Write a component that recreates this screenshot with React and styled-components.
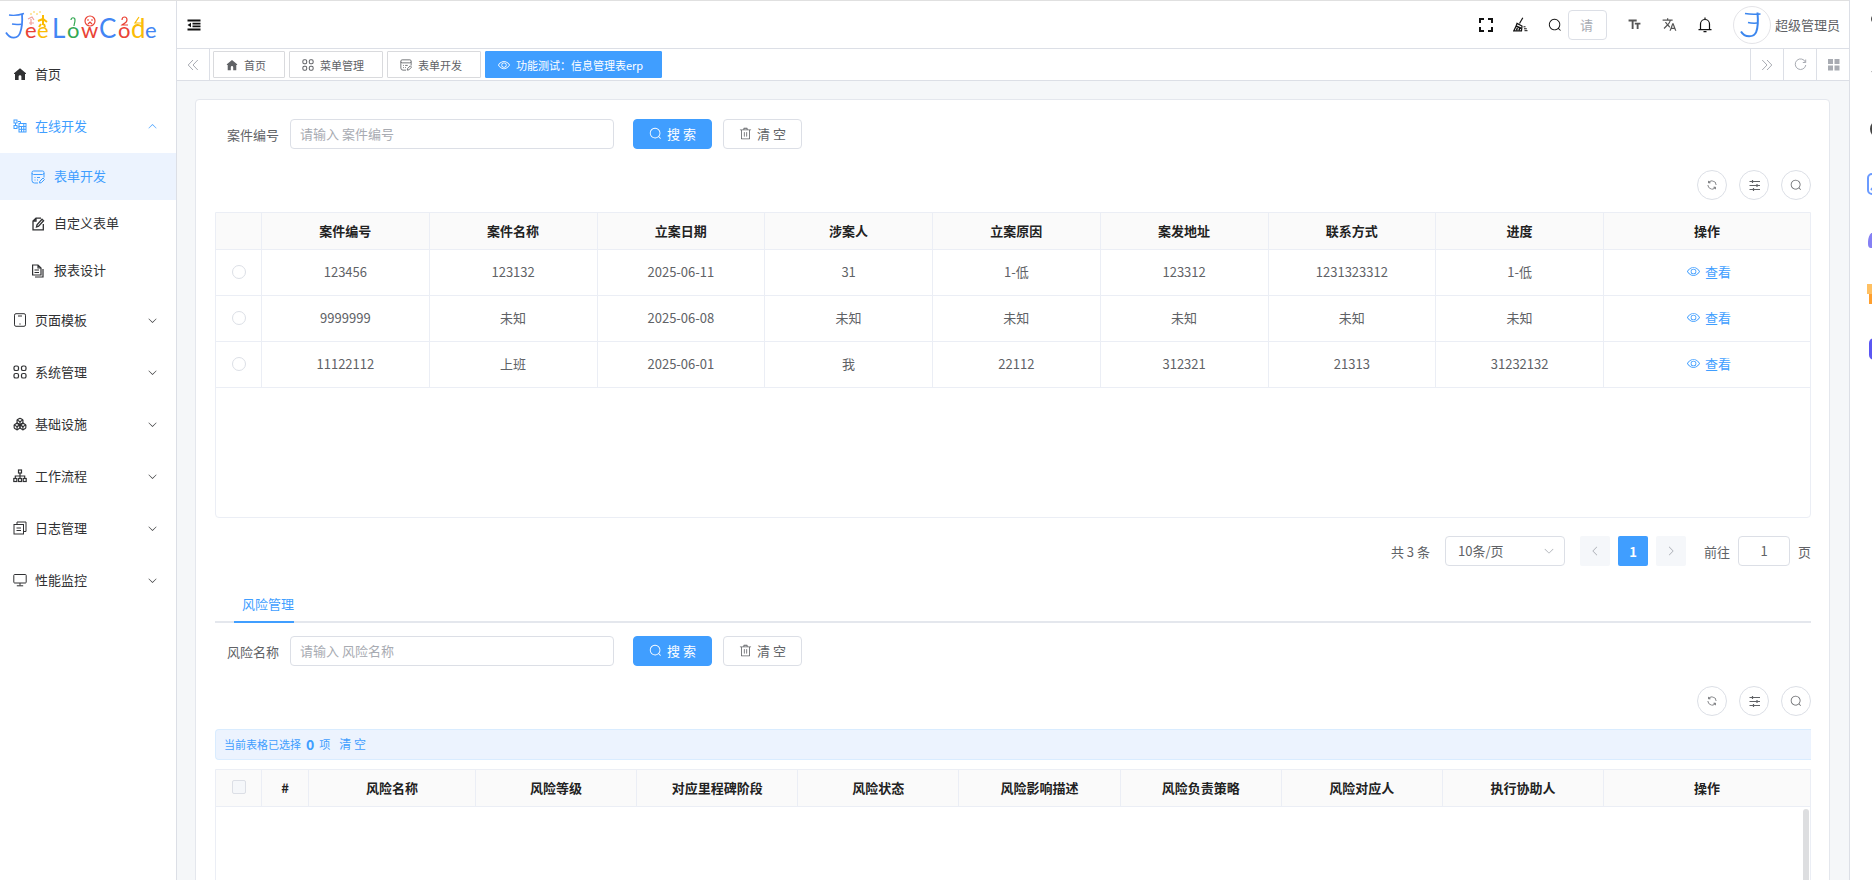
import React from "react";
import styled, { createGlobalStyle, css } from "styled-components";
import { MdTextFields, MdTranslate } from "react-icons/md";
import { Boxes } from "lucide-react";

const c = {
  primary: "#409eff",
  text: "#606266",
  dark: "#303133",
  line: "#dcdfe6",
  cell: "#ebeef5",
  muted: "#a8abb2",
  tint: "#ecf3fe",
};

const Global = createGlobalStyle`
  *, *::before, *::after { box-sizing: border-box; }
  html, body { margin: 0; height: 100%; }
  body, button, input, select {
    font-family: "Noto Sans CJK SC", "Noto Sans", sans-serif;
    font-size: 13px;
  }
  body { color: ${c.text}; background: #fff; overflow: hidden; }
  button { padding: 0; border: 0; background: none; color: inherit; cursor: pointer; }
  svg { display: block; flex: none; }
`;

/* ---------- icons ---------- */
const paths = {
  search:
    "m795.904 750.72 124.992 124.928a32 32 0 0 1-45.248 45.248L750.656 795.904a416 416 0 1 1 45.248-45.248zM480 832a352 352 0 1 0 0-704 352 352 0 0 0 0 704z",
  view:
    "M512 160c320 0 512 352 512 352S832 864 512 864 0 512 0 512s192-352 512-352m0 64c-225.28 0-384.128 208.064-436.8 288 52.608 79.872 211.456 288 436.8 288 225.28 0 384.128-208.064 436.8-288-52.608-79.872-211.456-288-436.8-288zm0 64a224 224 0 1 1 0 448 224 224 0 0 1 0-448m0 64a160.192 160.192 0 0 0-160 160c0 88.192 71.744 160 160 160s160-71.808 160-160-71.744-160-160-160",
  trash:
    "M160 256H96a32 32 0 0 1 0-64h256V95.936a32 32 0 0 1 32-32h256a32 32 0 0 1 32 32V192h256a32 32 0 1 1 0 64h-64v672a32 32 0 0 1-32 32H192a32 32 0 0 1-32-32zm448-64v-64H416v64zM224 896h576V256H224zm192-128a32 32 0 0 1-32-32V416a32 32 0 0 1 64 0v320a32 32 0 0 1-32 32m192 0a32 32 0 0 1-32-32V416a32 32 0 0 1 64 0v320a32 32 0 0 1-32 32",
  down:
    "M831.872 340.864 512 652.672 192.128 340.864a30.592 30.592 0 0 0-42.752 0 29.12 29.12 0 0 0 0 41.6L489.664 714.24a32 32 0 0 0 44.672 0l340.288-331.712a29.12 29.12 0 0 0 0-41.728 30.592 30.592 0 0 0-42.752 0z",
  refresh:
    "M771.776 794.88A384 384 0 0 1 128 512h64a320 320 0 0 0 555.712 216.448H654.72a32 32 0 1 1 0-64h149.056a32 32 0 0 1 32 32v148.928a32 32 0 1 1-64 0v-50.56zM276.288 295.616h92.992a32 32 0 0 1 0 64H220.16a32 32 0 0 1-32-32V178.56a32 32 0 0 1 64 0v50.56A384 384 0 0 1 896.128 512h-64a320 320 0 0 0-555.776-216.384z",
};

const Glyph = ({ name, size = 14, turn = 0 }) => (
  <svg width={size} height={size} viewBox="0 0 1024 1024" fill="currentColor" aria-hidden="true">
    <path d={paths[name]} transform={`rotate(${turn} 512 512)`} />
  </svg>
);

const Line = ({ size = 14, width = 1, box = 14, children }) => (
  <svg
    width={size}
    height={size}
    viewBox={`0 0 ${box} ${box}`}
    fill="none"
    stroke="currentColor"
    strokeWidth={width}
    aria-hidden="true"
  >
    {children}
  </svg>
);

const HomeIcon = ({ size = 14 }) => (
  <svg width={size} height={size} viewBox="0 0 14 14" fill="currentColor" aria-hidden="true">
    <path d="M7 1.2 1 6.2V7h1v6h3.6V9.6a1.4 1.4 0 0 1 2.8 0V13H12V7h1v-.8z" />
  </svg>
);

const OnlineIcon = () => (
  <Line>
    <rect x="1" y="1" width="3" height="3" />
    <rect x="1" y="6.5" width="3" height="3" />
    <path d="M5 2.5h2.5v2M6 8H4.5M2.5 4v2.5" />
    <rect x="6" y="4.5" width="7" height="8.5" />
    <path d="M6 7.5h7M6 10.3h7M8.5 7.5V13M10.8 4.5V13" />
  </Line>
);

const FormIcon = ({ size = 14 }) => (
  <Line size={size}>
    <rect x="1" y="1" width="12" height="3.5" rx="1.5" />
    <path d="M1 3v7.5A2.5 2.5 0 0 0 3.500 13H7M13 3v4.500M3.500 7.500h1M6 7.500h3M3.500 10h1M6 10h1" />
    <path d="M8.500 13l.3-1.800 3.200-3.200 1.500 1.500-3.200 3.200z" />
  </Line>
);

const EditIcon = () => (
  <Line width={1.3}>
    <path d="M12.300 7v5.800H2V4l3-2.800h5M5 1.500V4H2" />
    <path d="M5.500 10l.5-2.200 5-5.600 1.600 1.500-5 5.500z" />
  </Line>
);

const ReportIcon = () => (
  <Line width={1.2}>
    <path d="M1.600 1h5.400l3 3v7H1.600zM7 1v3h3M3.500 6h4.500M3.500 8.500h4.500" />
    <path d="M12 5v8H4" />
  </Line>
);

const TabletIcon = () => (
  <Line>
    <rect x="1.500" y=".7" width="11" height="12.600" rx="1.500" />
    <path d="M5 3h4M6.400 11h1.200" strokeWidth="1.200" />
  </Line>
);

const GridIcon = ({ size = 14 }) => (
  <Line size={size} width={1.2}>
    <rect x="1" y="1" width="4.500" height="4.500" rx="1.600" />
    <rect x="8.500" y="1" width="4.500" height="4.500" rx="1.600" />
    <rect x="1" y="8.500" width="4.500" height="4.500" rx="1.600" />
    <rect x="8.500" y="8.500" width="4.500" height="4.500" rx="1.600" />
  </Line>
);

const SitemapIcon = () => (
  <Line width={1.2}>
    <rect x="5.500" y="1" width="3" height="3" />
    <path d="M7 4v5M2.300 9.500V7h9.400v2.500" />
    <rect x=".8" y="9.500" width="3" height="3" />
    <rect x="5.500" y="9.500" width="3" height="3" />
    <rect x="10.200" y="9.500" width="3" height="3" />
  </Line>
);

const LogIcon = () => (
  <Line>
    <rect x="1" y="3.500" width="9.500" height="9.500" />
    <path d="M4 3.500V1h9v9.500h-2.500M3.500 7h4.500M3.500 9.500h4.500" />
  </Line>
);

const MonitorIcon = () => (
  <Line>
    <rect x=".8" y="1.500" width="12.400" height="8.500" rx=".8" />
    <path d="M7 10v2.500M3.800 12.800h6.400" />
  </Line>
);

const FoldIcon = () => (
  <svg width="14" height="12" viewBox="0 0 14 12" fill="currentColor" aria-hidden="true">
    <path d="M.5.500h13v2H.5zM5.500 3.700h8v1.700h-8zM5.500 6.600h8v1.700h-8zM.5 9.500h13v2H.5zM.5 6l3.500-2.300v4.600z" />
  </svg>
);

const FullIcon = () => (
  <Line width={2}>
    <path d="M1 5V1h4M9 1h4v4M13 9v4H9M5 13H1V9" />
  </Line>
);

const BroomIcon = () => (
  <Line size={15} box={15} width={1.2}>
    <path d="M9.800.8 6.500 6.500" />
    <path d="M4 6.400l5 2.600-.5 4.800H.8C2 11.500 3.200 9.500 4 6.400z" />
    <path d="M3 9l5.500 2.500M3.500 13.500l.8-2.500M6 13.500l.6-2" strokeWidth="1.500" />
    <path d="M10.500 9.800h2M11 11.800h2.800M11.500 13.700h3" strokeWidth="1" />
  </Line>
);

const BellIcon = () => (
  <Line size={16} box={16} width={1.2}>
    <path d="M1.500 12.700h13M3.500 12.500V7a4.500 4.500 0 0 1 9 0v5.500M8 .6v2M6.500 14.600h3" />
  </Line>
);

const ReloadIcon = () => (
  <Line size={13} box={13}>
    <path d="M11.500 4.300A5.300 5.300 0 1 0 11.800 7M11.700 1.500v3H8.800" />
  </Line>
);

const ChevronsIcon = ({ turn = 0 }) => (
  <Line size={12} box={12}>
    <path d="M6 1 1.200 6 6 11M10.800 1 6 6l4.800 5" transform={`rotate(${turn} 6 6)`} />
  </Line>
);

const TilesIcon = () => (
  <svg width="13" height="13" viewBox="0 0 13 13" fill="currentColor" aria-hidden="true">
    <path d="M1 1h5v5H1zM7.500 1h5v5h-5zM1 7.500h5v5H1zM7.500 7.500h5v5h-5z" />
  </svg>
);

const SlidersIcon = () => (
  <Line size={13} box={13}>
    <path d="M1.500 2.500h10.500M1.500 6.500h10.500M1.500 10.500h10.500" />
    <path d="M4.500 1v3M9 5v3M5.500 9v3" strokeWidth="1.200" />
  </Line>
);

const Emblem = ({ size = 30 }) => (
  <svg width={size} height={size} viewBox="0 0 30 30" fill="none" stroke="#3b86ee" aria-hidden="true">
    <path d="M8 3.500c4 .8 9 1 15.500.5" strokeWidth="1.500" />
    <path d="M11 12.500c3 .8 6 .8 9 .6" strokeWidth="1.500" />
    <path d="M20.500 2.500c.7 8 .8 14-1.300 19.500-2.200 5.500-11.500 6-15.200-.5" strokeWidth="2" />
  </svg>
);

const wordmark = [
  ["e", 20, "#ea4335", 22],
  ["e", 32, "#fbbc05", 22],
  ["L", 47, "#4285f4", 26],
  ["o", 62, "#34a853", 22],
  ["w", 76, "#ea4335", 22],
  ["C", 94, "#4285f4", 26],
  ["o", 113, "#ea4335", 22],
  ["d", 126, "#fbbc05", 26],
  ["e", 140, "#4285f4", 22],
];

const Wordmark = () => (
  <svg width="160" height="40" viewBox="0 -4 160 40" role="img" aria-label="JeeLowCode">
    <g fill="none" stroke="#4285f4">
      <path d="M4 5c4 .6 9 .6 15-1.500M7 14c3 .6 6 .6 9 .2" strokeWidth="1.400" />
      <path d="M17 4c.6 8 0 14-2 19-2 5.500-9.500 7-14-.5" strokeWidth="1.800" />
    </g>
    <g fontFamily="Lato, sans-serif">
      {wordmark.map(([ch, x, fill, size], i) => (
        <text key={i} x={x} y="28" fill={fill} fontSize={size}>
          {ch}
        </text>
      ))}
    </g>
    <g fill="none" strokeWidth="1.200">
      <path d="M23 9l4-2 2 3M24 13h5M26 9v6" stroke="#f0a09a" />
      <path d="M38 5v10M33 11l5-2 4 3M36 14l-2 3M39 14l1 3" stroke="#fbbc05" strokeWidth="2" />
      <path d="M66 10c0-3 4-3 4 0s-1 4-1 6" stroke="#34a853" />
      <circle cx="85" cy="11" r="5" stroke="#ea4335" />
      <path d="M82 10h2M86 10h2M83 14l2-2 2 2" stroke="#ea4335" />
      <path d="M117 10c0-4 5-4 5 0 0 3-4 4-5 5h6" stroke="#ea4335" />
      <path d="M134 7l-4 6h7" stroke="#fbbc05" />
    </g>
    <g fill="#fbbc05">
      <circle cx="26" cy="4" r=".7" />
      <circle cx="29" cy="2" r=".7" />
      <circle cx="32" cy="4" r=".7" />
      <circle cx="35" cy="2" r=".7" />
    </g>
  </svg>
);

/* ---------- frame ---------- */
const App = styled.div`
  display: flex;
  height: 100vh;
`;
const Shell = styled.div`
  display: flex;
  flex: 1;
  min-width: 0;
  border-top: 1px solid #e0e0e0;
`;
const Sidebar = styled.aside`
  flex: none;
  width: 177px;
  border-right: 1px solid ${c.line};
`;
const Logo = styled.a`
  display: block;
  height: 47px;
  padding: 5px 0 0 5px;
`;
const MenuLink = styled.a`
  display: flex;
  align-items: center;
  height: ${(p) => (p.$sub ? 47 : 52)}px;
  padding: ${(p) => (p.$sub ? "0 22px 0 31px" : "0 18px 0 13px")};
  gap: ${(p) => (p.$sub ? 9 : 8)}px;
  color: ${(p) => (p.$on ? c.primary : c.dark)};
  background: ${(p) => (p.$sub && p.$on ? c.tint : "transparent")};
  text-decoration: none;
  span { flex: 1; padding-bottom: 2px; }
`;
const SubMenu = styled.div`
  padding-top: 1px;
`;
const Main = styled.main`
  display: flex;
  flex: 1;
  flex-direction: column;
  min-width: 0;
  background: #f5f7f9;
`;
const Rail = styled.aside`
  display: flex;
  flex: none;
  flex-direction: column;
  align-items: flex-start;
  gap: 31px;
  width: 23px;
  padding: 7px 0 0 17px;
  overflow: hidden;
  border-left: 1px solid ${c.line};
`;

/* ---------- header ---------- */
const Header = styled.header`
  display: flex;
  align-items: center;
  height: 48px;
  padding: 0 9px 0 10px;
  color: #111;
  background: #fff;
  border-bottom: 1px solid ${c.line};
`;
const HeaderTools = styled.div`
  display: flex;
  align-items: center;
  gap: 20px;
  margin-left: auto;
`;
const IconButton = styled.button`
  display: flex;
  align-items: center;
  justify-content: center;
  color: ${(p) => p.$tone || "#111"};
`;
const QuickSearch = styled.label`
  display: flex;
  align-items: center;
  gap: 6px;
`;
const User = styled.button`
  display: flex;
  align-items: center;
  gap: 4px;
  color: ${c.text};
`;
const Avatar = styled.span`
  display: flex;
  align-items: center;
  justify-content: center;
  width: 38px;
  height: 38px;
  border: 1px solid #e4e4e8;
  border-radius: 50%;
`;

/* ---------- tab strip ---------- */
const TabStrip = styled.nav`
  display: flex;
  height: 32px;
  background: #fff;
  border-bottom: 1px solid ${c.line};
`;
const StripButton = styled.button`
  display: flex;
  align-items: center;
  justify-content: center;
  width: 33px;
  color: ${c.muted};
  border: solid ${c.line};
  border-width: ${(p) => (p.$start ? "0 1px 0 0" : "0 0 0 1px")};
`;
const PageTabs = styled.div`
  display: flex;
  flex: 1;
  align-items: center;
  gap: 4px;
  padding-left: 3px;
`;
const PageTab = styled.a`
  display: flex;
  align-items: center;
  gap: 6px;
  height: 27px;
  padding: 0 18px 0 12px;
  border: 1px solid ${(p) => (p.$on ? c.primary : "#d9dadd")};
  background: ${(p) => (p.$on ? c.primary : "#fff")};
  color: ${(p) => (p.$on ? "#fff" : c.text)};
  border-radius: 1px;
  font-size: 11px;
  white-space: nowrap;
  text-decoration: none;
`;

/* ---------- content ---------- */
const Scroller = styled.div`
  flex: 1;
  min-height: 0;
  overflow: hidden;
  padding: 18px 19px 0 18px;
`;
const Card = styled.section`
  min-height: 100%;
  padding: 19px 18px 18px 19px;
  background: #fff;
  border: 1px solid #e4e7ed;
  border-radius: 4px 4px 0 0;
`;
const SearchForm = styled.form`
  display: flex;
  align-items: center;
  padding-left: 12px;
`;
const Field = styled.label`
  display: flex;
  flex: 0 1 387px;
  align-items: center;
  gap: 11px;
  margin-right: 19px;
  white-space: nowrap;
`;
const boxed = css`
  height: 30px;
  border: 1px solid ${c.line};
  border-radius: 4px;
  background: #fff;
  color: ${c.text};
  outline: 0;
`;
const TextInput = styled.input`
  ${boxed}
  flex: 1;
  min-width: 0;
  padding: 0 9px 2px;
  &::placeholder { color: ${c.muted}; opacity: 1; }
`;
const QuickInput = styled(TextInput)`
  flex: none;
  width: 39px;
  padding: 0 11px;
`;
const Button = styled.button`
  ${boxed}
  display: flex;
  align-items: center;
  justify-content: center;
  gap: 5px;
  width: 79px;
  margin-right: 11px;
  padding-bottom: 1px;
  ${(p) =>
    p.$primary &&
    css`
      color: #fff;
      background: ${c.primary};
      border-color: ${c.primary};
    `}
`;
const Tools = styled.div`
  display: flex;
  justify-content: flex-end;
  gap: 12px;
  padding: ${(p) => p.$pad || "21px 0 12px"};
`;
const RoundButton = styled.button`
  display: flex;
  align-items: center;
  justify-content: center;
  width: 30px;
  height: 30px;
  border: 1px solid ${c.line};
  border-radius: 50%;
`;
const TableBox = styled.div`
  position: relative;
  min-height: 306px;
  border: 1px solid ${c.cell};
  border-radius: 0 0 4px 4px;
`;
const Table = styled.table`
  width: 100%;
  table-layout: fixed;
  border-spacing: 0;
  text-align: center;
  th, td {
    padding: 0 0 2px;
    border: solid ${c.cell};
    border-width: 0 1px 1px 0;
  }
  th:last-child, td:last-child { border-right: 0; }
  th { height: 37px; color: #222; background: #fafafa; font-weight: 700; }
  td { height: 46px; }
`;
const Col = styled.col`
  width: ${(p) => p.$w}px;
`;
const Tick = styled.input`
  display: block;
  width: 14px;
  height: 14px;
  margin: 0 auto;
  appearance: none;
  border: 1px solid ${c.line};
  background: ${(p) => (p.type === "radio" ? "#fff" : "#f5f7fa")};
  border-radius: ${(p) => (p.type === "radio" ? "50%" : "2px")};
`;
const LinkButton = styled.button`
  display: inline-flex;
  align-items: center;
  gap: 5px;
  padding-left: 4px;
  color: ${c.primary};
`;
const Scrollbar = styled.div`
  position: absolute;
  top: 39px;
  right: 1px;
  bottom: 2px;
  width: 6px;
  border-radius: 3px;
  background: #dddee0;
`;
const Pager = styled.div`
  display: flex;
  align-items: center;
  justify-content: flex-end;
  gap: 8px;
  padding-top: 18px;
`;
const SelectBox = styled.label`
  position: relative;
  margin: 0 7px;
  svg {
    position: absolute;
    top: 9px;
    right: 10px;
    color: ${c.muted};
    pointer-events: none;
  }
`;
const Select = styled.select`
  ${boxed}
  display: block;
  width: 120px;
  padding: 0 12px 2px;
  appearance: none;
`;
const PageButton = styled.button`
  display: flex;
  align-items: center;
  justify-content: center;
  width: 30px;
  height: 30px;
  border-radius: 2px;
  background: ${(p) => (p.$on ? c.primary : "#f5f7fa")};
  color: ${(p) => (p.$on ? "#fff" : c.muted)};
  font-weight: 700;
`;
const Jump = styled.label`
  display: flex;
  align-items: center;
  gap: 8px;
  margin-left: 10px;
`;
const JumpInput = styled(TextInput)`
  flex: none;
  width: 52px;
  text-align: center;
`;
const SubTabs = styled.div`
  display: flex;
  margin: 20px 0 13px;
  padding-left: 19px;
  border-bottom: 2px solid #e4e7ed;
`;
const SubTab = styled.button`
  height: 37px;
  margin-bottom: -2px;
  padding-left: 8px;
  border-bottom: 2px solid ${c.primary};
  color: ${c.primary};
`;
const Notice = styled.div`
  display: flex;
  align-items: center;
  gap: 5px;
  height: 31px;
  margin-bottom: 9px;
  padding: 0 0 2px 8px;
  border: 1px solid #d9ecff;
  border-right: 0;
  border-radius: 4px 0 0 4px;
  background: ${c.tint};
  color: ${c.primary};
  font-size: 11px;
  b { font-size: 14px; }
  button { margin-left: 4px; font-size: 12px; }
`;

const menuTop = [
  ["页面模板", <TabletIcon />],
  ["系统管理", <GridIcon />],
  ["基础设施", <Boxes size={14} strokeWidth={2} />],
  ["工作流程", <SitemapIcon />],
  ["日志管理", <LogIcon />],
  ["性能监控", <MonitorIcon />],
];
const subMenu = [
  ["表单开发", <FormIcon />, true],
  ["自定义表单", <EditIcon />],
  ["报表设计", <ReportIcon />],
];
const pageTabs = [
  ["首页", <HomeIcon size={12} />],
  ["菜单管理", <GridIcon size={12} />],
  ["表单开发", <FormIcon size={12} />],
  ["功能测试：信息管理表erp", <Glyph name="view" size={12} />, true],
];
const caseColumns = ["案件编号", "案件名称", "立案日期", "涉案人", "立案原因", "案发地址", "联系方式", "进度"];
const cases = [
  ["123456", "123132", "2025-06-11", "31", "1-低", "123312", "1231323312", "1-低"],
  ["9999999", "未知", "2025-06-08", "未知", "未知", "未知", "未知", "未知"],
  ["11122112", "上班", "2025-06-01", "我", "22112", "312321", "21313", "31232132"],
];
const riskColumns = ["风险名称", "风险等级", "对应里程碑阶段", "风险状态", "风险影响描述", "风险负责策略", "风险对应人", "执行协助人"];

const Search = ({ label }) => (
  <SearchForm onSubmit={(e) => e.preventDefault()}>
    <Field>
      {label}
      <TextInput type="text" placeholder={`请输入 ${label}`} />
    </Field>
    <Button type="submit" $primary>
      <Glyph name="search" size={13} />
      搜 索
    </Button>
    <Button type="reset">
      <Glyph name="trash" size={13} />
      清 空
    </Button>
  </SearchForm>
);

const ToolRow = ({ pad }) => (
  <Tools $pad={pad}>
    <RoundButton type="button" aria-label="刷新"><Glyph name="refresh" size={12} /></RoundButton>
    <RoundButton type="button" aria-label="列设置"><SlidersIcon /></RoundButton>
    <RoundButton type="button" aria-label="搜索"><Glyph name="search" size={12} /></RoundButton>
  </Tools>
);

const RailIcons = () => (
  <Rail>
    <svg width="24" height="24" viewBox="0 0 24 24" fill="#444"><circle cx="9" cy="12" r="5" /></svg>
    <svg width="24" height="24" viewBox="0 0 24 24" fill="#444"><path d="m13 3 2 5h8l-6 6 2 8-7-4-4 4 2-8-6-4.500h6z" /></svg>
    <svg width="24" height="24" viewBox="0 0 24 24" fill="none" stroke="#444" strokeWidth="2"><circle cx="12" cy="12" r="8" /></svg>
    <svg width="24" height="24" viewBox="0 0 24 24" fill="none" stroke="#6b9bff" strokeWidth="2"><rect x="1" y="2" width="21" height="20" rx="4" /><path d="m4 18 6-7 8 8" /></svg>
    <svg width="24" height="24" viewBox="0 0 24 24" fill="#8580f4"><path d="M10 3c-6 1-9 6-9 12 0 4 0 6 4 6h17V3z" /></svg>
    <svg width="24" height="24" viewBox="0 0 24 24"><path fill="#ff9f2e" d="M2 12h22v10H2z" /><path fill="#ffc062" d="M0 2h24v10H0z" /></svg>
    <svg width="24" height="24" viewBox="0 0 24 24" fill="#5b57f3"><rect x="2" y="1" width="22" height="22" rx="5" /></svg>
  </Rail>
);

export default function Page() {
  return (
    <App>
      <Global />
      <Shell>
        <Sidebar>
          <Logo href="#"><Wordmark /></Logo>
          <nav>
            <MenuLink href="#"><HomeIcon /><span>首页</span></MenuLink>
            <MenuLink href="#" $on>
              <OnlineIcon /><span>在线开发</span><Glyph name="down" size={11} turn={180} />
            </MenuLink>
            <SubMenu>
              {subMenu.map(([name, icon, on]) => (
                <MenuLink href="#" key={name} $sub $on={on}>{icon}<span>{name}</span></MenuLink>
              ))}
            </SubMenu>
            {menuTop.map(([name, icon]) => (
              <MenuLink href="#" key={name}>{icon}<span>{name}</span><Glyph name="down" size={11} /></MenuLink>
            ))}
          </nav>
        </Sidebar>

        <Main>
          <Header>
            <IconButton aria-label="折叠菜单"><FoldIcon /></IconButton>
            <HeaderTools>
              <IconButton aria-label="全屏"><FullIcon /></IconButton>
              <IconButton aria-label="清除缓存"><BroomIcon /></IconButton>
              <QuickSearch>
                <Glyph name="search" size={14} />
                <QuickInput type="text" placeholder="请" aria-label="搜索菜单" />
              </QuickSearch>
              <IconButton aria-label="字号" $tone="#555"><MdTextFields size={15} /></IconButton>
              <IconButton aria-label="语言" $tone="#555"><MdTranslate size={15} /></IconButton>
              <IconButton aria-label="消息"><BellIcon /></IconButton>
              <User><Avatar><Emblem /></Avatar>超级管理员</User>
            </HeaderTools>
          </Header>

          <TabStrip>
            <StripButton $start aria-label="向左"><ChevronsIcon /></StripButton>
            <PageTabs>
              {pageTabs.map(([name, icon, on]) => (
                <PageTab href="#" key={name} $on={on}>{icon}{name}</PageTab>
              ))}
            </PageTabs>
            <StripButton aria-label="向右"><ChevronsIcon turn={180} /></StripButton>
            <StripButton aria-label="重新加载"><ReloadIcon /></StripButton>
            <StripButton aria-label="标签菜单"><TilesIcon /></StripButton>
          </TabStrip>

          <Scroller>
            <Card>
              <Search label="案件编号" />
              <ToolRow />
              <TableBox>
                <Table>
                  <colgroup>
                    <Col $w={46} />
                    {caseColumns.map((name) => <col key={name} />)}
                    <Col $w={206} />
                  </colgroup>
                  <thead>
                    <tr>
                      <th />
                      {caseColumns.map((name) => <th key={name}>{name}</th>)}
                      <th>操作</th>
                    </tr>
                  </thead>
                  <tbody>
                    {cases.map((row) => (
                      <tr key={row[0]}>
                        <td><Tick type="radio" name="case" aria-label={row[0]} /></td>
                        {row.map((value, i) => <td key={i}>{value}</td>)}
                        <td><LinkButton type="button"><Glyph name="view" size={13} />查看</LinkButton></td>
                      </tr>
                    ))}
                  </tbody>
                </Table>
              </TableBox>

              <Pager>
                共 3 条
                <SelectBox>
                  <Select aria-label="每页条数"><option>10条/页</option></Select>
                  <Glyph name="down" size={12} />
                </SelectBox>
                <PageButton aria-label="上一页"><Glyph name="down" size={12} turn={90} /></PageButton>
                <PageButton $on>1</PageButton>
                <PageButton aria-label="下一页"><Glyph name="down" size={12} turn={-90} /></PageButton>
                <Jump>前往<JumpInput type="text" defaultValue="1" />页</Jump>
              </Pager>

              <SubTabs role="tablist">
                <SubTab role="tab" aria-selected="true">风险管理</SubTab>
              </SubTabs>
              <Search label="风险名称" />
              <ToolRow pad="20px 0 13px" />
              <Notice>
                当前表格已选择<b>0</b>项<button type="button">清 空</button>
              </Notice>
              <TableBox>
                <Table>
                  <colgroup>
                    <Col $w={46} />
                    <Col $w={47} />
                    <Col $w={167} />
                    {riskColumns.slice(1).map((name) => <col key={name} />)}
                    <Col $w={206} />
                  </colgroup>
                  <thead>
                    <tr>
                      <th><Tick type="checkbox" aria-label="全选" /></th>
                      <th>#</th>
                      {riskColumns.map((name) => <th key={name}>{name}</th>)}
                      <th>操作</th>
                    </tr>
                  </thead>
                </Table>
                <Scrollbar />
              </TableBox>
            </Card>
          </Scroller>
        </Main>
      </Shell>
      <RailIcons />
    </App>
  );
}
